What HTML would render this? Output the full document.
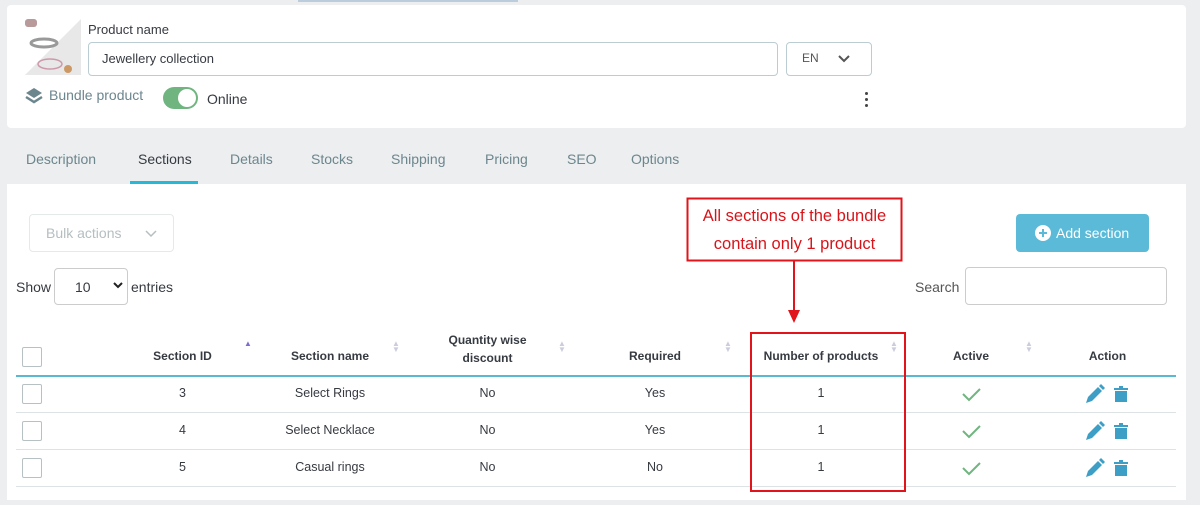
<!DOCTYPE html>
<html><head><style>
body{margin:0;width:1200px;height:505px;background:#eceeef;font-family:"Liberation Sans",sans-serif;position:relative;overflow:hidden;color:#363a41}
.a{position:absolute}
.card{background:#fff;border-radius:4px}
.inp{border:1px solid #bbcdd2;border-radius:4px;background:#fff}
.th{font-size:12px;font-weight:bold;text-align:center;color:#363a41}
.td{font-size:12.5px;text-align:center;color:#363a41}
.cb{width:18px;height:18px;border:1px solid #b7c1c4;border-radius:2px;background:#fff}
.line{height:1px;background:#dde3e5;left:16px;width:1160px}
.tab{font-size:14px;color:#6c868e;top:151px}
.sort{font-size:8px;color:#ccd;line-height:6px}
</style></head><body>
<div class="a" style="left:298px;top:0;width:220px;height:2px;background:#bcd"></div>
<div class="a card" style="left:7px;top:5px;width:1179px;height:123px"></div>
<svg class="a" style="left:25px;top:19px" width="56" height="56"><polygon points="56,0 56,56 0,56" fill="#e8e8e8"/><rect x="0" y="0" width="12" height="8" rx="3" fill="#b89a9a"/><ellipse cx="19" cy="24" rx="13" ry="4" fill="none" stroke="#999" stroke-width="3"/><ellipse cx="25" cy="45" rx="12" ry="5" fill="none" stroke="#c9a" stroke-width="1.5"/><circle cx="43" cy="50" r="4" fill="#c96"/></svg>
<div class="a" style="left:88px;top:22px;font-size:13px">Product name</div>
<div class="a inp" style="left:88px;top:42px;width:688px;height:32px"></div>
<div class="a" style="left:102px;top:51px;font-size:13px">Jewellery collection</div>
<div class="a inp" style="left:786px;top:42px;width:84px;height:32px"></div>
<div class="a" style="left:802px;top:51px;font-size:12px;color:#555">EN</div>
<svg class="a" style="left:837px;top:54px" width="14" height="10"><path d="M2 2l5 5 5-5" stroke="#555" stroke-width="2" fill="none"/></svg>
<svg class="a" style="left:25px;top:87px" width="18" height="18"><path d="M9 1l8 5-8 5-8-5z" fill="#6c868e"/><path d="M1 10l8 5 8-5" stroke="#6c868e" stroke-width="2.5" fill="none"/></svg>
<div class="a" style="left:49px;top:87px;font-size:14px;color:#6c868e">Bundle product</div>
<div class="a" style="left:163px;top:87px;width:35px;height:22px;border-radius:11px;background:#70b580"></div>
<div class="a" style="left:178px;top:89px;width:18px;height:18px;border-radius:50%;background:#fff"></div>
<div class="a" style="left:207px;top:91px;font-size:14px">Online</div>
<div class="a" style="left:865px;top:92px;width:3px;height:3px;background:#444;border-radius:50%;box-shadow:0 6px #444,0 12px #444"></div>
<div class="a tab" style="left:26px">Description</div>
<div class="a tab" style="left:138px;color:#363a41">Sections</div>
<div class="a" style="left:130px;top:181px;width:68px;height:3px;background:#25b9d7"></div>
<div class="a tab" style="left:230px">Details</div>
<div class="a tab" style="left:311px">Stocks</div>
<div class="a tab" style="left:391px">Shipping</div>
<div class="a tab" style="left:485px">Pricing</div>
<div class="a tab" style="left:567px">SEO</div>
<div class="a tab" style="left:631px">Options</div>
<div class="a card" style="left:7px;top:184px;width:1179px;height:316px;border-radius:0"></div>
<div class="a inp" style="left:29px;top:214px;width:143px;height:36px;border-color:#e5e9ea"></div>
<div class="a" style="left:46px;top:225px;font-size:14px;color:#b5bec1">Bulk actions</div>
<svg class="a" style="left:144px;top:229px" width="14" height="10"><path d="M2 2l5 5 5-5" stroke="#b5bec1" stroke-width="1.5" fill="none"/></svg>
<div class="a" style="left:1016px;top:214px;width:133px;height:38px;border-radius:4px;background:#5bbad8"></div>
<svg class="a" style="left:1034px;top:224px" width="18" height="18"><circle cx="9" cy="9" r="8" fill="#fff"/><path d="M9 5v8M5 9h8" stroke="#5bbad8" stroke-width="2"/></svg>
<div class="a" style="left:1056px;top:225px;font-size:14px;color:#fff">Add section</div>
<div class="a" style="left:16px;top:279px;font-size:14px">Show</div>
<div class="a inp" style="left:54px;top:268px;width:72px;height:35px;border-color:#ccc"></div>
<div class="a" style="left:75px;top:279px;font-size:14px">10</div>
<svg class="a" style="left:113px;top:282px" width="10" height="8"><path d="M1 1l4 4 4-4" stroke="#222" stroke-width="2" fill="none"/></svg>
<div class="a" style="left:131px;top:279px;font-size:14px">entries</div>
<div class="a" style="left:915px;top:279px;font-size:14px;color:#555">Search</div>
<div class="a inp" style="left:965px;top:267px;width:200px;height:36px;border-color:#ccc"></div>
<div class="a cb" style="left:22px;top:347px"></div>
<div class="a th" style="left:130px;top:349px;width:105px">Section ID</div>
<div class="a" style="left:244px;top:339px;font-size:8px;color:#7c6cd4">▲</div>
<div class="a th" style="left:270px;top:349px;width:120px">Section name</div>
<div class="a sort" style="left:392px;top:341px">▲<br>▼</div>
<div class="a th" style="left:430px;top:331px;width:115px;line-height:18px">Quantity wise<br>discount</div>
<div class="a sort" style="left:558px;top:341px">▲<br>▼</div>
<div class="a th" style="left:605px;top:349px;width:100px">Required</div>
<div class="a sort" style="left:724px;top:341px">▲<br>▼</div>
<div class="a th" style="left:756px;top:349px;width:130px">Number of products</div>
<div class="a sort" style="left:890px;top:341px">▲<br>▼</div>
<div class="a th" style="left:930px;top:349px;width:82px">Active</div>
<div class="a sort" style="left:1025px;top:341px">▲<br>▼</div>
<div class="a th" style="left:1070px;top:349px;width:75px">Action</div>
<div class="a" style="left:16px;top:375px;width:1160px;height:2px;background:#5bb8d3"></div>
<div class="a line" style="top:412px"></div>
<div class="a line" style="top:449px"></div>
<div class="a line" style="top:486px"></div>
<div class="a cb" style="left:22px;top:384px"></div>
<div class="a cb" style="left:22px;top:421px"></div>
<div class="a cb" style="left:22px;top:458px"></div>
<div class="a td" style="left:130px;top:386px;width:105px">3</div>
<div class="a td" style="left:270px;top:386px;width:120px">Select Rings</div>
<div class="a td" style="left:430px;top:386px;width:115px">No</div>
<div class="a td" style="left:605px;top:386px;width:100px">Yes</div>
<div class="a td" style="left:756px;top:386px;width:130px">1</div>
<div class="a td" style="left:130px;top:423px;width:105px">4</div>
<div class="a td" style="left:270px;top:423px;width:120px">Select Necklace</div>
<div class="a td" style="left:430px;top:423px;width:115px">No</div>
<div class="a td" style="left:605px;top:423px;width:100px">Yes</div>
<div class="a td" style="left:756px;top:423px;width:130px">1</div>
<div class="a td" style="left:130px;top:460px;width:105px">5</div>
<div class="a td" style="left:270px;top:460px;width:120px">Casual rings</div>
<div class="a td" style="left:430px;top:460px;width:115px">No</div>
<div class="a td" style="left:605px;top:460px;width:100px">No</div>
<div class="a td" style="left:756px;top:460px;width:130px">1</div>
<svg class="a" style="left:0;top:0" width="1200" height="505">
<g id="r">
<path d="M963 394l6 6 11-11" stroke="#70b580" stroke-width="2" fill="none"/>
<path d="M1086 403l2-6 10-10 4 4-10 10z M1099 386l2-2 4 4-2 2z" fill="#3d9fc6"/>
<path d="M1114 388h14v2h-14z M1119 386h4v2h-4z M1115 391h12v11h-12z" fill="#3d9fc6"/>
</g>
<use href="#r" y="37"/><use href="#r" y="74"/>
<rect x="687.5" y="198.5" width="214" height="62" fill="#fff" stroke="#e0141a" stroke-width="2"/>
<rect x="751" y="333" width="154" height="158" fill="none" stroke="#e0141a" stroke-width="2"/>
<path d="M794 261v50" stroke="#e0141a" stroke-width="2"/>
<path d="M788 310h12l-6 13z" fill="#e0141a"/>
</svg>
<div class="a" style="left:688px;top:202px;width:213px;text-align:center;font-size:16.5px;line-height:28px;color:#d8141a">All sections of the bundle<br>contain only 1 product</div>
</body></html>
